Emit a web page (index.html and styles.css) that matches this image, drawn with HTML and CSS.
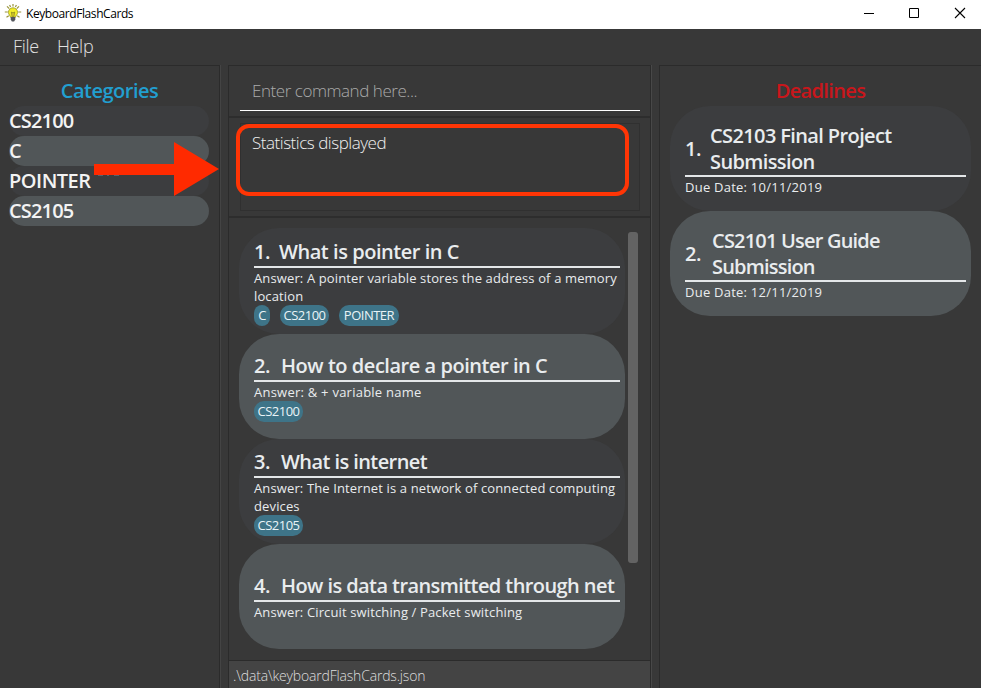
FILE: index.html
```html
<!DOCTYPE html>
<html lang="en">
<head>
<meta charset="utf-8">
<title>KeyboardFlashCards</title>
<link rel="stylesheet" href="styles.css">
</head>
<body>
<div class="window">
  <header class="titlebar">
    <svg class="bulb" width="18" height="18" viewBox="0 0 18 18">
      <path d="M9 0v2.500M3 2.400l2.300 2.300M15 2.400l-2.300 2.300M.8 8h3M14.200 8h3M2.500 13.300l2.300-1.600M15.500 13.300l-2.300-1.600M5.600 1l1 2M12.400 1l-1 2" stroke="#99933a" stroke-width="1.200" fill="none"/>
      <path d="M9 3.800a4.600 4.600 0 0 0-4.600 4.500c0 2.400 1.800 3 2.200 5h4.800c.4-2 2.200-2.600 2.200-5A4.600 4.600 0 0 0 9 3.800z" fill="#f2ee27" stroke="#9b9822" stroke-width=".8"/>
      <path d="M7.300 8l1.100 1 .6-1 .6 1 1.100-1-.9 5H8.200z" fill="#d6c928" stroke="#77751f" stroke-width=".6"/>
      <path d="M6.700 13h4.600v2.500L10.100 17.500H7.900l-1.200-2z" fill="#54565c"/>
    </svg>
    <span class="app-name">KeyboardFlashCards</span>
    <svg class="controls" width="104" height="12" viewBox="0 0 104 12" fill="none" stroke="#000">
      <path d="M0 6.500h10M45.500 1.500h9v9h-9z"/>
      <path d="M91 1l10 10M101 1L91 11" stroke-width="1.100"/>
    </svg>
  </header>
  <nav class="menubar"><span>File</span><span>Help</span></nav>
  <main class="panes">
    <section class="pane categories">
      <h2>Categories</h2>
      <ul>
        <li><span class="code">CS2100</span></li>
        <li><span>C</span></li>
        <li><span class="word">POINTER</span></li>
        <li><span class="code">CS2105</span></li>
      </ul>
    </section>
    <section class="center">
      <div class="command"><div class="field">Enter command here...</div></div>
      <div class="result"><div class="display">Statistics displayed</div></div>
      <div class="cards">
        <div class="list">
          <article class="card">
            <h3><span class="num">1.</span><span>What is pointer in C</span></h3>
            <p>Answer: A pointer variable stores the address of a memory<br>location</p>
            <div class="tags"><b class="short">C</b><b>CS2100</b><b class="long">POINTER</b></div>
          </article>
          <article class="card">
            <h3><span class="num wide">2.</span><span>How to declare a pointer in C</span></h3>
            <p class="loose">Answer: &amp; + variable name</p>
            <div class="tags"><b>CS2100</b></div>
          </article>
          <article class="card">
            <h3><span class="num wide">3.</span><span class="tight">What is internet</span></h3>
            <p>Answer: The Internet is a network of connected computing<br>devices</p>
            <div class="tags"><b>CS2105</b></div>
          </article>
          <article class="card untagged">
            <h3><span class="num wide">4.</span><span class="tight">How is data transmitted through net</span></h3>
            <p>Answer: Circuit switching / Packet switching</p>
          </article>
        </div>
        <div class="thumb"></div>
      </div>
      <footer class="status">.\data\keyboardFlashCards.json</footer>
    </section>
    <section class="pane deadlines">
      <h2>Deadlines</h2>
      <article class="due">
        <h3><span class="num">1.</span><span>CS2103 Final Project<br>Submission</span></h3>
        <p class="loose">Due Date: 10/11/2019</p>
      </article>
      <article class="due">
        <h3><span class="num wide">2.</span><span class="tight">CS2101 User Guide<br>Submission</span></h3>
        <p class="loose">Due Date: 12/11/2019</p>
      </article>
    </section>
  </main>
  <div class="highlight"></div>
  <svg class="arrow" width="126" height="56" viewBox="0 0 126 56"><path d="M0 23h80V1l45 27-45 27V34H0z" fill="#ff2a00"/><path d="M4 34.500h5M13 34.500h2M20 34.500h5" stroke="#59616a" stroke-width="1"/></svg>
</div>
</body>
</html>
```
FILE: styles.css
```css
* { box-sizing: border-box; }
body { margin: 0; font-family: "Open Sans", "Noto Sans", sans-serif; background: #383838; }
h2, h3, p, ul { margin: 0; padding: 0; list-style: none; }
.window { position: relative; width: 981px; height: 688px; overflow: hidden; display: flex; flex-direction: column; white-space: nowrap; }
.titlebar { height: 29px; background: #fff; display: flex; align-items: center; padding: 0 13px 3px 4px; flex: none; }
.app-name { font-size: 12px; letter-spacing: -0.42px; color: #000; margin-left: 4px; flex: 1; }
.menubar { height: 36px; flex: none; display: flex; padding-left: 13px; gap: 18px; font-size: 18px; font-weight: 300; letter-spacing: -0.3px; line-height: 35px; color: #e2e2e2; }
.panes { flex: 1; display: grid; grid-template-columns: 220px 423px 1fr; column-gap: 8px; min-height: 0; }
.pane { border: 1px solid #2b2b2b; border-bottom: 0; padding: 10px; background: #383838; box-shadow: 1px 0 #444; }
.pane h2 { font-size: 20px; line-height: 30px; font-weight: 600; text-align: center; }
.categories { border-left: 0; padding-left: 9px; }
.categories h2 { color: #229fd0; letter-spacing: -0.5px; padding-left: 1px; }
.categories li { height: 30px; border-radius: 15px; font-size: 20px; font-weight: 600; line-height: 30px; color: #f3f3f3; background: #3c3d3f; }
.categories li:nth-child(even) { background: #515658; }
.code { letter-spacing: -0.85px; }
.word { letter-spacing: -0.5px; }
.center { display: flex; flex-direction: column; border: 1px solid #2b2b2b; border-bottom: 0; box-shadow: 1px 0 #484848; min-height: 0; }
.command { height: 52px; padding: 8px 10px 0 11px; border-bottom: 2px solid #2d2d2d; }
.field { height: 37px; border-bottom: 1px solid #fff; padding-left: 12px; font-size: 17px; font-weight: 300; letter-spacing: -0.45px; line-height: 34px; color: #aaa; }
.result { height: 100px; padding: 5px 10px 6px 11px; border-bottom: 2px solid #2d2d2d; }
.display { height: 88px; border: 1px solid #303030; padding: 5px 0 0 11px; font-size: 17px; font-weight: 300; letter-spacing: -0.47px; line-height: 28px; color: #f0f0f0; }
.cards { flex: 1; min-height: 0; padding: 10px 11px 0 10px; display: flex; }
.list { width: 386px; }
.card, .due { height: 105px; border-radius: 40px; background: #3c3d3f; color: #e9ecee; display: flex; flex-direction: column; justify-content: center; padding: 2px 5px 0 15px; }
.due { padding-top: 0; }
.card:nth-child(even), .due:nth-of-type(even) { background: #515658; }
.card:first-child { height: 106px; }
.card.untagged { padding-top: 1px; }
.card h3 { font-size: 20px; font-weight: 600; letter-spacing: -0.46px; line-height: 26px; height: 29px; border-bottom: 2px solid #e4e7e9; display: flex; }
.card h3 .tight { letter-spacing: -0.58px; }
.num { width: 25px; flex: none; letter-spacing: -0.5px; }
.num.wide { width: 27px; }
.card p, .due p { font-size: 13px; line-height: 18px; padding-top: 1px; letter-spacing: 0.13px; }
.card p.loose, .due p.loose { letter-spacing: 0.24px; }
.tags { display: flex; gap: 10px; height: 21px; }
.tags b { height: 21px; width: 49px; border-radius: 10px; background: #3e7488; font-size: 13px; line-height: 21px; font-weight: 500; letter-spacing: -0.5px; text-align: center; color: #e9f3f7; }
.tags .short { width: 16px; border-radius: 8px; }
.tags .long { width: 60px; }
.thumb { width: 10px; height: 331px; border-radius: 3px; background: #636363; margin: 4px 0 0 3px; }
.status { height: 28px; border-top: 1px solid #2b2b2b; background: #444; padding-left: 4px; font-size: 14px; font-weight: 300; letter-spacing: -0.18px; line-height: 29px; color: #dedede; }
.deadlines { border-right: 0; }
.deadlines h2 { color: #c9161b; letter-spacing: -0.65px; }
.due h3 { display: flex; align-items: center; font-size: 20px; font-weight: 600; letter-spacing: -0.62px; line-height: 26px; padding-top: 1px; border-bottom: 2px solid #e4e7e9; }
.due h3 .tight { letter-spacing: -0.8px; }
.highlight { position: absolute; left: 236px; top: 124px; width: 393px; height: 72px; border: 4px solid #ff3505; border-radius: 13px; }
.arrow { position: absolute; left: 94px; top: 141px; }
```
